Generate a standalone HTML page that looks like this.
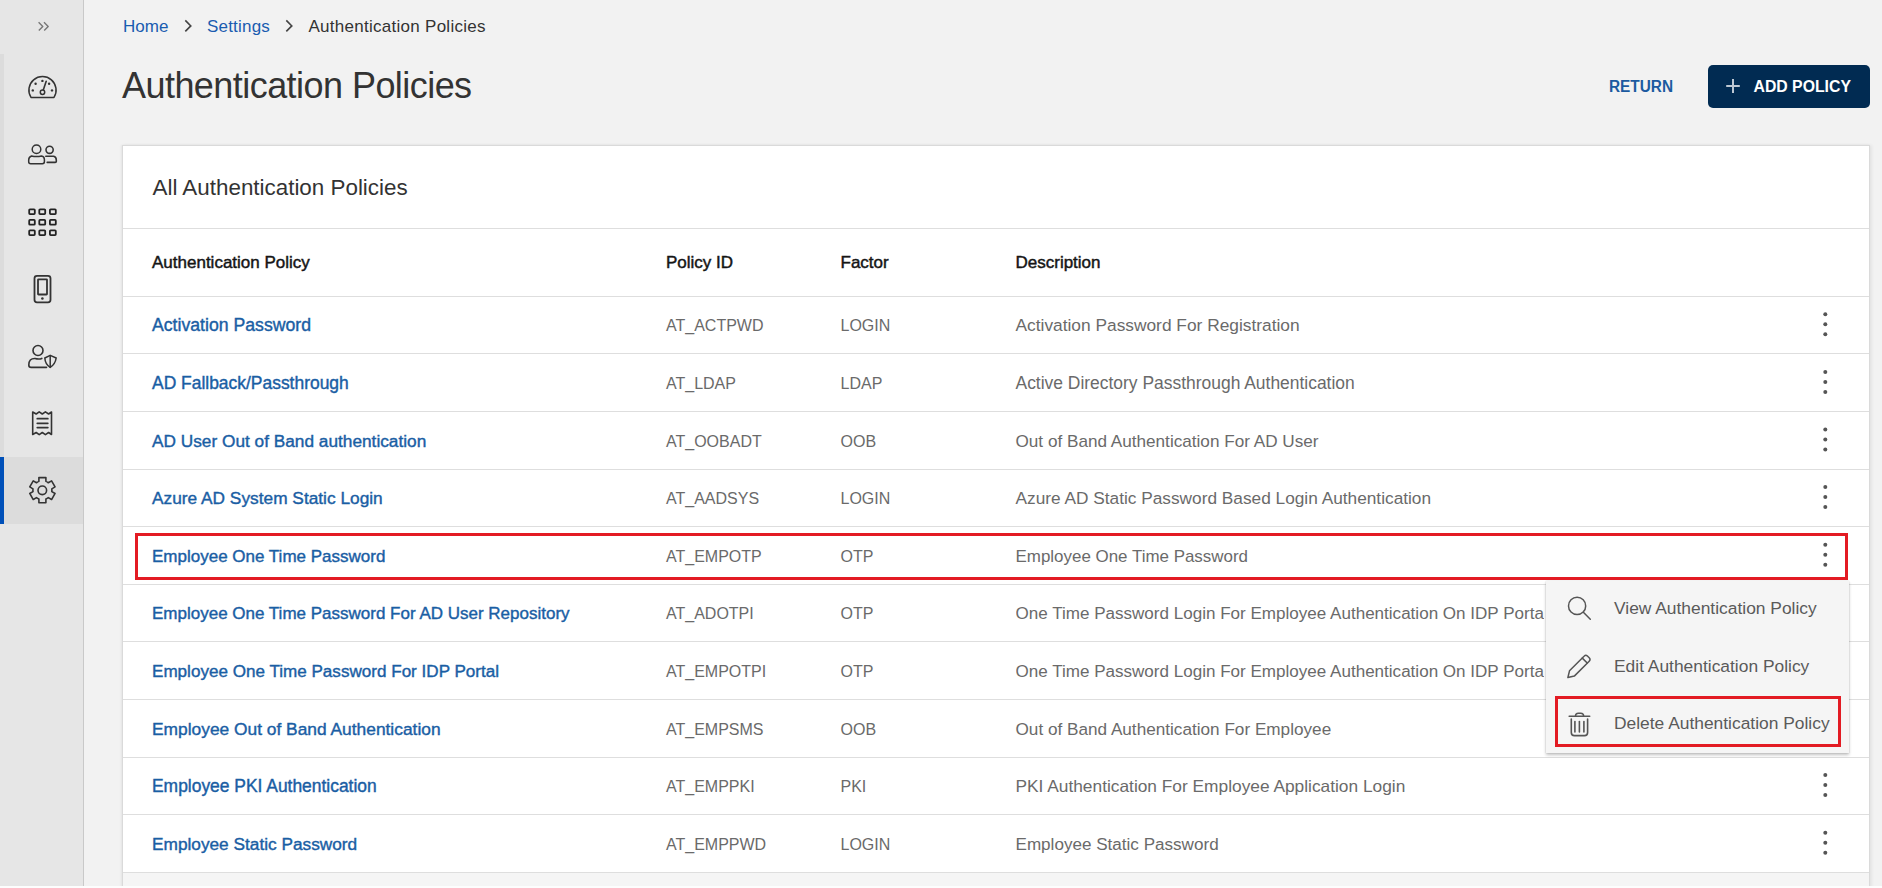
<!DOCTYPE html>
<html><head><meta charset="utf-8">
<style>
*{box-sizing:border-box;margin:0;padding:0}
html,body{width:1882px;height:888px;overflow:hidden;background:#f2f2f2;font-family:"Liberation Sans",sans-serif;position:relative}
.abs{position:absolute;white-space:nowrap}
#side{position:absolute;left:0;top:0;width:84px;height:888px;background:#e6e6e6;border-right:1px solid #c9c9c9}
#strip{position:absolute;left:0;top:54px;width:4px;height:403px;background:#dcdcdc}
#active{position:absolute;left:0;top:457px;width:83px;height:67px;background:#dcdcdc}
#activebar{position:absolute;left:0;top:457px;width:4px;height:67px;background:#0050b9}
.crumb{top:0.7px;line-height:52px;font-size:17px}
.title{left:122px;top:56px;line-height:60px;font-size:36px;letter-spacing:-0.55px;color:#333}
#ret{left:1608.5px;top:65px;line-height:43px;font-size:16px;transform:scaleX(0.96);transform-origin:0 0;font-weight:bold;color:#1b5aa0}
#add{position:absolute;left:1708px;top:65px;width:162px;height:43px;background:#012b52;border-radius:5px}
#addtxt{left:1753.5px;top:65px;line-height:43px;font-size:15.8px;font-weight:bold;color:#fff}
#card{position:absolute;left:122px;top:145px;width:1748px;height:760px;background:#fff;border:1px solid #dadada;box-shadow:-1px 0 2px rgba(0,0,0,0.06),2px 0 3px rgba(0,0,0,0.06)}
.cardtitle{left:152.5px;top:146.7px;line-height:82px;font-size:22.4px;color:#333}
.hline{position:absolute;left:123px;width:1746px;height:1px;background:#dedede}
.th{top:229px;line-height:67px;font-size:17px;color:#151515;-webkit-text-stroke:0.45px #151515}
.td{line-height:57px;font-size:16px;color:#6a6a6a}
.lnk{color:#1a5ea4;-webkit-text-stroke:0.4px #1a5ea4}
.desc{font-size:17.3px}
#foot{position:absolute;left:123px;top:873px;width:1746px;height:15px;background:#f5f5f5}
#menu{position:absolute;left:1546px;top:581px;width:303px;height:172px;background:#f5f5f5;box-shadow:0 2px 3px rgba(0,0,0,0.24),0 0 1.5px rgba(0,0,0,0.14)}
.mi{left:1614px;line-height:57px;font-size:17.4px;color:#5a5a5a}
.redbox{position:absolute;border:3px solid #e31b23}
</style></head><body>
<div id="side">
  <div id="strip"></div>
  <div id="active"></div>
  <div id="activebar"></div>
</div>
<svg class="abs" style="left:0;top:0" width="84" height="888" viewBox="0 0 84 888" fill="none" stroke="#333" stroke-width="1.6" stroke-linecap="round" stroke-linejoin="round">
  <!-- chevrons -->
  <g stroke="#777" stroke-width="1.4" stroke-linecap="butt"><polyline points="38.6,22.2 42.8,26.4 38.8,30.5"/><polyline points="44,22.2 48.2,26.4 44.2,30.5"/></g>
  <!-- gauge -->
  <path d="M31,97.4 A13.6,13.6 0 1 1 54,97.4 Z" stroke-width="1.5"/>
  <circle cx="42.5" cy="92.3" r="2.2" stroke-width="1.5"/>
  <line x1="43.3" y1="89.9" x2="46.2" y2="81.2"/>
  <g fill="#333" stroke="none"><circle cx="32.8" cy="90.4" r="1.2"/><circle cx="35.6" cy="83.8" r="1.2"/><circle cx="42.4" cy="80.9" r="1.2"/><circle cx="49.1" cy="83.8" r="1.2"/><circle cx="52" cy="90.4" r="1.2"/></g>
  <!-- users -->
  <circle cx="36.5" cy="149.2" r="4.3" stroke-width="1.5"/>
  <path d="M31.5,156 Q36.5,157.2 41.5,156 Q44.3,156.4 44.4,159.5 L44.4,161.8 Q44.4,163.7 42.4,163.7 L30.7,163.7 Q28.7,163.7 28.7,161.7 L28.7,160 Q28.7,156.8 31.5,156 Z" stroke-width="1.5"/>
  <circle cx="49.6" cy="149.8" r="3.6"/>
  <path d="M45.8,156.2 L53.6,156.2 Q56.3,156.8 56.3,160 L56.3,161.5 Q56.3,162.4 55.2,162.4 L47.2,162.4"/>
  <!-- grid -->
  <g stroke="#222" stroke-width="1.8">
    <rect x="29.2" y="209.3" width="5.6" height="4.8" rx="0.8"/><rect x="39.3" y="209.3" width="5.9" height="4.8" rx="0.8"/><rect x="49.9" y="209.3" width="5.9" height="4.8" rx="0.8"/>
    <rect x="29.2" y="219.9" width="5.6" height="4.8" rx="0.8"/><rect x="39.3" y="219.9" width="5.9" height="4.8" rx="0.8"/><rect x="49.9" y="219.9" width="5.9" height="4.8" rx="0.8"/>
    <rect x="29.2" y="230.3" width="5.6" height="4.8" rx="0.8"/><rect x="39.3" y="230.3" width="5.9" height="4.8" rx="0.8"/><rect x="49.9" y="230.3" width="5.9" height="4.8" rx="0.8"/>
  </g>
  <!-- phone -->
  <rect x="34.5" y="275.8" width="16" height="26.5" rx="2.5" stroke-width="1.8"/>
  <rect x="38" y="279.3" width="9" height="15.2" rx="0.5" stroke-width="1.8"/>
  <circle cx="42.4" cy="298.5" r="1.3" fill="#333" stroke="none"/>
  <!-- user shield -->
  <circle cx="38" cy="350.5" r="5"/>
  <path d="M41.8,358.4 Q39,359.6 35,358.5 Q28.8,358.3 28.8,365 Q28.8,367.4 31.2,367.4 L46.5,367.4"/>
  <path d="M50.2,355.4 L44.8,358 Q45.2,364.3 50.2,367.4 Q55.2,364.3 56.2,358 Z" stroke-width="1.5"/>
  <line x1="50.2" y1="355.6" x2="50.2" y2="367.2" stroke-width="1.5"/>
  <!-- receipt -->
  <path d="M32.7,412 L36.2,414 L39.2,411.9 L42.3,414 L45.4,411.9 L48.6,414 L51.5,412 L51.5,434.5 L48.6,432.5 L45.4,434.6 L42.3,432.5 L39.2,434.6 L36.2,432.5 L32.7,434.5 Z" stroke-width="1.6"/>
  <g stroke-width="1.8"><line x1="37.3" y1="418.7" x2="47.8" y2="418.7"/><line x1="37.3" y1="423.3" x2="47.8" y2="423.3"/><line x1="37.3" y1="427.6" x2="47.8" y2="427.6"/></g>
  <!-- gear -->
  <path id="gear" d="M38.90,481.37 L38.90,477.60 L45.90,477.60 L45.90,481.37 A9.50,9.50 0 0 1 48.30,482.75 L51.56,480.87 L55.06,486.93 L51.80,488.82 A9.50,9.50 0 0 1 51.80,491.58 L55.06,493.47 L51.56,499.53 L48.30,497.65 A9.50,9.50 0 0 1 45.90,499.03 L45.90,502.80 L38.90,502.80 L38.90,499.03 A9.50,9.50 0 0 1 36.50,497.65 L33.24,499.53 L29.74,493.47 L33.00,491.58 A9.50,9.50 0 0 1 33.00,488.82 L29.74,486.93 L33.24,480.87 L36.50,482.75 A9.50,9.50 0 0 1 38.90,481.37 Z"/>
  <circle cx="42.3" cy="490.3" r="4.3"/>
</svg>

<!-- breadcrumb -->
<div class="abs crumb" style="left:123px;color:#1a5cb0">Home</div>
<div class="abs crumb" style="left:207px;color:#1a5cb0;letter-spacing:0.2px">Settings</div>
<div class="abs crumb" style="left:308.5px;color:#333;letter-spacing:0.27px">Authentication Policies</div>
<svg class="abs" style="left:0;top:0" width="300" height="50" fill="none" stroke="#444" stroke-width="1.6"><polyline points="185.3,20.4 190.8,25.9 185.3,31.4"/><polyline points="286.3,20.4 291.8,25.9 286.3,31.4"/></svg>

<div class="abs title">Authentication Policies</div>
<div class="abs" id="ret">RETURN</div>
<div id="add"></div>
<svg class="abs" style="left:1720px;top:72px" width="30" height="30" fill="none" stroke="#bdc7d3" stroke-width="2"><line x1="6.2" y1="14" x2="19.8" y2="14"/><line x1="13" y1="7.1" x2="13" y2="21"/></svg>
<div class="abs" id="addtxt">ADD POLICY</div>

<div id="card"></div>
<div class="abs cardtitle">All Authentication Policies</div>
<div class="hline" style="top:228px"></div>
<div class="abs th" style="left:152px">Authentication Policy</div>
<div class="abs th" style="left:666px">Policy ID</div>
<div class="abs th" style="left:840.5px">Factor</div>
<div class="abs th" style="left:1015.5px">Description</div>
<!--ROWS--><div class="abs td lnk" style="left:152px;top:297.4px;font-size:17.67px">Activation Password</div>
<div class="abs td" style="left:666px;top:297.4px">AT_ACTPWD</div>
<div class="abs td" style="left:840.5px;top:297.4px">LOGIN</div>
<div class="abs td desc" style="left:1015.5px;top:297.4px;font-size:17.34px">Activation Password For Registration</div>
<div class="hline" style="top:353px"></div>
<div class="abs td lnk" style="left:152px;top:355.0px;font-size:17.44px">AD Fallback/Passthrough</div>
<div class="abs td" style="left:666px;top:355.0px">AT_LDAP</div>
<div class="abs td" style="left:840.5px;top:355.0px">LDAP</div>
<div class="abs td desc" style="left:1015.5px;top:355.0px;font-size:17.46px">Active Directory Passthrough Authentication</div>
<div class="hline" style="top:411px"></div>
<div class="abs td lnk" style="left:152px;top:412.6px;font-size:17.25px">AD User Out of Band authentication</div>
<div class="abs td" style="left:666px;top:412.6px">AT_OOBADT</div>
<div class="abs td" style="left:840.5px;top:412.6px">OOB</div>
<div class="abs td desc" style="left:1015.5px;top:412.6px;font-size:17.15px">Out of Band Authentication For AD User</div>
<div class="hline" style="top:469px"></div>
<div class="abs td lnk" style="left:152px;top:470.2px;font-size:17.31px">Azure AD System Static Login</div>
<div class="abs td" style="left:666px;top:470.2px">AT_AADSYS</div>
<div class="abs td" style="left:840.5px;top:470.2px">LOGIN</div>
<div class="abs td desc" style="left:1015.5px;top:470.2px;font-size:17.28px">Azure AD Static Password Based Login Authentication</div>
<div class="hline" style="top:526px"></div>
<div class="abs td lnk" style="left:152px;top:527.8px;font-size:17.01px">Employee One Time Password</div>
<div class="abs td" style="left:666px;top:527.8px">AT_EMPOTP</div>
<div class="abs td" style="left:840.5px;top:527.8px">OTP</div>
<div class="abs td desc" style="left:1015.5px;top:527.8px;font-size:16.96px">Employee One Time Password</div>
<div class="hline" style="top:584px"></div>
<div class="abs td lnk" style="left:152px;top:585.4px;font-size:17.01px">Employee One Time Password For AD User Repository</div>
<div class="abs td" style="left:666px;top:585.4px">AT_ADOTPI</div>
<div class="abs td" style="left:840.5px;top:585.4px">OTP</div>
<div class="abs td desc" style="left:1015.5px;top:585.4px;font-size:17.06px;width:528.5px;overflow:hidden">One Time Password Login For Employee Authentication On IDP Portal</div>
<div class="hline" style="top:641px"></div>
<div class="abs td lnk" style="left:152px;top:643.0px;font-size:17.08px">Employee One Time Password For IDP Portal</div>
<div class="abs td" style="left:666px;top:643.0px">AT_EMPOTPI</div>
<div class="abs td" style="left:840.5px;top:643.0px">OTP</div>
<div class="abs td desc" style="left:1015.5px;top:643.0px;font-size:17.06px;width:528.5px;overflow:hidden">One Time Password Login For Employee Authentication On IDP Portal</div>
<div class="hline" style="top:699px"></div>
<div class="abs td lnk" style="left:152px;top:700.6px;font-size:17.37px">Employee Out of Band Authentication</div>
<div class="abs td" style="left:666px;top:700.6px">AT_EMPSMS</div>
<div class="abs td" style="left:840.5px;top:700.6px">OOB</div>
<div class="abs td desc" style="left:1015.5px;top:700.6px;font-size:17.17px">Out of Band Authentication For Employee</div>
<div class="hline" style="top:757px"></div>
<div class="abs td lnk" style="left:152px;top:758.2px;font-size:17.43px">Employee PKI Authentication</div>
<div class="abs td" style="left:666px;top:758.2px">AT_EMPPKI</div>
<div class="abs td" style="left:840.5px;top:758.2px">PKI</div>
<div class="abs td desc" style="left:1015.5px;top:758.2px;font-size:17.32px">PKI Authentication For Employee Application Login</div>
<div class="hline" style="top:814px"></div>
<div class="abs td lnk" style="left:152px;top:815.8px;font-size:17.25px">Employee Static Password</div>
<div class="abs td" style="left:666px;top:815.8px">AT_EMPPWD</div>
<div class="abs td" style="left:840.5px;top:815.8px">LOGIN</div>
<div class="abs td desc" style="left:1015.5px;top:815.8px;font-size:17.09px">Employee Static Password</div>
<div class="hline" style="top:872px"></div>
<div class="hline" style="top:296px"></div>
<svg class="abs" style="left:0;top:0" width="1882" height="888" fill="#555"><circle cx="1825.3" cy="314.3" r="2"/><circle cx="1825.3" cy="324.3" r="2"/><circle cx="1825.3" cy="334.3" r="2"/><circle cx="1825.3" cy="371.9" r="2"/><circle cx="1825.3" cy="381.9" r="2"/><circle cx="1825.3" cy="391.9" r="2"/><circle cx="1825.3" cy="429.5" r="2"/><circle cx="1825.3" cy="439.5" r="2"/><circle cx="1825.3" cy="449.5" r="2"/><circle cx="1825.3" cy="487.1" r="2"/><circle cx="1825.3" cy="497.1" r="2"/><circle cx="1825.3" cy="507.1" r="2"/><circle cx="1825.3" cy="544.7" r="2"/><circle cx="1825.3" cy="554.7" r="2"/><circle cx="1825.3" cy="564.7" r="2"/><circle cx="1825.3" cy="602.3" r="2"/><circle cx="1825.3" cy="612.3" r="2"/><circle cx="1825.3" cy="622.3" r="2"/><circle cx="1825.3" cy="659.9" r="2"/><circle cx="1825.3" cy="669.9" r="2"/><circle cx="1825.3" cy="679.9" r="2"/><circle cx="1825.3" cy="717.5" r="2"/><circle cx="1825.3" cy="727.5" r="2"/><circle cx="1825.3" cy="737.5" r="2"/><circle cx="1825.3" cy="775.1" r="2"/><circle cx="1825.3" cy="785.1" r="2"/><circle cx="1825.3" cy="795.1" r="2"/><circle cx="1825.3" cy="832.7" r="2"/><circle cx="1825.3" cy="842.7" r="2"/><circle cx="1825.3" cy="852.7" r="2"/></svg><!--/ROWS-->
<div id="foot"></div>
<div style="position:absolute;left:0;top:886px;width:1882px;height:2px;background:#fdfdfd"></div>

<div id="menu"></div>
<div class="abs mi" style="top:579.5px">View Authentication Policy</div>
<div class="abs mi" style="top:637.5px">Edit Authentication Policy</div>
<div class="abs mi" style="top:695px">Delete Authentication Policy</div>
<svg class="abs" style="left:0;top:0" width="1882" height="888" fill="none" stroke="#555" stroke-width="1.5" stroke-linecap="round" stroke-linejoin="round">
  <circle cx="1577.1" cy="605.9" r="8.6"/>
  <line x1="1583.6" y1="612.4" x2="1590.3" y2="619.3"/>
  <path d="M1567.9,677.5 L1569.5,670.8 L1584.3,656 Q1585.8,654.4 1587.4,656 L1589.2,657.8 Q1590.9,659.5 1589.2,661.2 L1574.3,676.1 Z"/>
  <line x1="1582.3" y1="658.1" x2="1587.2" y2="663"/>
  <line x1="1569.2" y1="716.3" x2="1589.7" y2="716.3" stroke-width="1.6"/>
  <path d="M1575.5,716 Q1575.5,713.2 1578.3,713.2 L1580.8,713.2 Q1583.6,713.2 1583.6,716" stroke-width="1.5"/>
  <path d="M1571.3,719 L1571.3,732.5 Q1571.3,735.6 1574.4,735.6 L1584.5,735.6 Q1587.6,735.6 1587.6,732.5 L1587.6,719" stroke-width="1.6"/>
  <g stroke-width="1.6"><line x1="1574.9" y1="721.5" x2="1574.9" y2="732"/><line x1="1579.4" y1="721.5" x2="1579.4" y2="732"/><line x1="1583.9" y1="721.5" x2="1583.9" y2="732"/></g>
</svg>
<div class="redbox" style="left:135px;top:533px;width:1713px;height:47px"></div>
<div class="redbox" style="left:1555px;top:696px;width:286px;height:51px"></div>
</body></html>
